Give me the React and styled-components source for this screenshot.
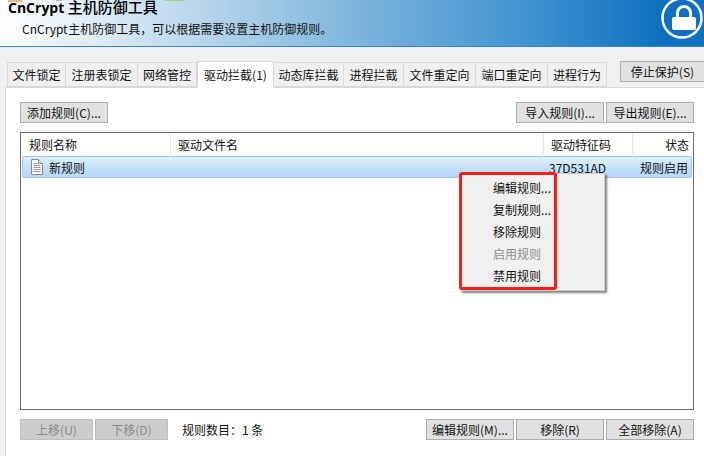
import React from "react";
import styled, { createGlobalStyle } from "styled-components";

const GlobalStyle = createGlobalStyle`
  html, body {
    margin: 0;
    padding: 0;
    background: #f0f0f0;
  }
  body {
    font-family: "Noto Sans CJK SC", "Open Sans", sans-serif;
    font-size: 12px;
    color: #111;
  }
  * {
    box-sizing: border-box;
  }
`;

const Page = styled.div`
  position: relative;
  width: 704px;
  height: 456px;
  overflow: hidden;
  display: flex;
  flex-direction: column;
`;

const Banner = styled.header`
  position: relative;
  flex: none;
  height: 47px;
  padding-left: 8px;
  border-bottom: 1px solid #2f86ee;
  background: linear-gradient(90deg, #ffffff 0%, #c9dff0 22%, #7fb6dc 50%, #3d91cf 76%, #0e70be 94%, #0e70be 100%);
`;

const Title = styled.h1`
  margin: -4px 0 0;
  font-size: 15px;
  line-height: 22px;
  font-weight: 500;
  color: #000;

  b {
    font-family: "Open Sans", sans-serif;
    font-size: 14px;
    font-weight: 700;
  }
`;

const Subtitle = styled.p`
  margin: 2px 0 0 14px;
  font-size: 12px;
  line-height: 16px;
  word-spacing: -2px;
  color: #111;
`;

const TopScraps = styled.svg`
  position: absolute;
  top: 0;
  left: 0;
`;

const LockIcon = styled.svg`
  position: absolute;
  top: -4px;
  right: 1px;
`;

const TabRow = styled.div`
  flex: none;
  height: 40px;
  padding: 13px 0 0 7px;
  display: flex;
  align-items: flex-end;
`;

const Tab = styled.div`
  width: ${(p) => p.$w}px;
  height: ${(p) => (p.$active ? 27 : 25)}px;
  margin-bottom: ${(p) => (p.$active ? -1 : 0)}px;
  display: flex;
  align-items: center;
  justify-content: center;
  background: ${(p) => (p.$active ? "#fff" : "#f0f0f0")};
  border: 1px solid #d9d9d9;
  border-left-width: ${(p) => (p.$first || p.$active ? 1 : 0)}px;
  border-bottom-color: ${(p) => (p.$active ? "#fff" : "#d9d9d9")};
  position: relative;
  z-index: ${(p) => (p.$active ? 1 : 0)};
  white-space: nowrap;
`;

const StopButton = styled.button`
  flex: none;
  width: 84px;
  height: 21px;
  margin: 0 0 5px 13px;
  padding: 0;
  font: inherit;
  color: #111;
  background: #e1e1e1;
  border: 1px solid #adadad;
  border-right: 0;
`;

const Panel = styled.main`
  flex: 1;
  margin-left: 5px;
  padding: 14px 10px 0 14px;
  background: #fff;
  border-left: 1px solid #d9d9d9;
  border-top: 1px solid #d9d9d9;
  display: flex;
  flex-direction: column;
`;

const ToolRow = styled.div`
  display: flex;
  align-items: center;
  gap: 2px;
  height: 21px;
`;

const Spacer = styled.div`
  flex: 1;
`;

const Button = styled.button`
  flex: none;
  width: ${(p) => p.$w}px;
  height: 21px;
  padding: 0;
  font: inherit;
  white-space: nowrap;
  color: ${(p) => (p.disabled ? "#8a8a8a" : "#111")};
  background: ${(p) => (p.disabled ? "#cccccc" : "#e1e1e1")};
  border: 1px solid ${(p) => (p.disabled ? "#bfbfbf" : "#adadad")};
`;

const Table = styled.section`
  flex: none;
  height: 278px;
  margin-top: 9px;
  padding: 0 1px;
  border: 1px solid #6b6b6b;
`;

const HeaderRow = styled.div`
  display: grid;
  grid-template-columns: 149px 373px 89px 1fr;
  height: 23px;
`;

const HeaderCell = styled.div`
  padding: 0 7px;
  line-height: 24px;
  border-right: 1px solid #e5e5e5;
  text-align: ${(p) => (p.$right ? "right" : "left")};

  &:last-child {
    border-right: 0;
    padding-right: 3px;
  }
`;

const Row = styled.div`
  display: grid;
  grid-template-columns: 147px 373px 90px 1fr;
  height: 22px;
  align-items: center;
  border: 1px solid #a3c5e6;
  border-radius: 2px;
  background: linear-gradient(180deg, #dff0fb 0%, #c6e2f8 50%, #b6d7fa 100%);
`;

const NameCell = styled.div`
  display: flex;
  align-items: center;
  gap: 6px;
  padding-left: 8px;
`;

const Cell = styled.div`
  padding-left: 6px;
  text-align: ${(p) => (p.$right ? "right" : "left")};
  padding-right: ${(p) => (p.$right ? 3 : 0)}px;
`;

const BottomRow = styled(ToolRow)`
  margin-top: 9px;
`;

const CountLabel = styled.span`
  margin-left: 12px;
`;

const Menu = styled.div`
  position: absolute;
  left: 460px;
  top: 173px;
  width: 145px;
  padding: 3px 0;
  background: #f0f0f0;
  border: 1px solid #d0d0d0;
  box-shadow: 2px 2px 2px rgba(0, 0, 0, 0.5);
`;

const MenuItem = styled.div`
  height: 22px;
  line-height: 21px;
  padding-left: 32px;
  color: ${(p) => (p.$disabled ? "#8d8d8d" : "#111")};
`;

const Highlight = styled.div`
  position: absolute;
  left: 459px;
  top: 172px;
  width: 98px;
  height: 118px;
  border: 3px solid #fb1c14;
  border-radius: 3px;
`;

const tabs = [
  { label: "文件锁定", w: 59 },
  { label: "注册表锁定", w: 72 },
  { label: "网络管控", w: 59 },
  { label: "驱动拦截(1)", w: 77, active: true },
  { label: "动态库拦截", w: 70 },
  { label: "进程拦截", w: 60 },
  { label: "文件重定向", w: 72 },
  { label: "端口重定向", w: 72 },
  { label: "进程行为", w: 59 },
];

const menuItems = [
  { label: "编辑规则..." },
  { label: "复制规则..." },
  { label: "移除规则" },
  { label: "启用规则", disabled: true },
  { label: "禁用规则" },
];

const FileIcon = () => (
  <svg width="12" height="16" viewBox="0 0 12 16">
    <path d="M.5 .5h7l4 4v11h-11z" fill="#fafafa" stroke="#8c8c8c" />
    <path d="M7.5 .5v4h4" fill="#e4e4e4" stroke="#8c8c8c" />
    <path d="M2.5 4.5h4M2.5 6.5h7M2.5 8.5h7M2.5 10.5h7M2.5 12.5h7" stroke="#9a9a9a" />
  </svg>
);

export default function App() {
  return (
    <Page>
      <GlobalStyle />
      <Banner>
        <TopScraps width="200" height="4" viewBox="0 0 200 4">
          <rect x="8" y="0" width="14" height="2" fill="#f2b27a" />
          <rect x="56" y="0" width="6" height="1" fill="#9ccf8a" />
          <rect x="165" y="0" width="20" height="1" fill="#9ccf8a" />
        </TopScraps>
        <Title>
          <b>CnCrypt</b> 主机防御工具
        </Title>
        <Subtitle>CnCrypt 主机防御工具，可以根据需要设置主机防御规则。</Subtitle>
        <LockIcon width="42" height="45" viewBox="0 0 42 45">
          <circle cx="21" cy="22" r="19.5" fill="none" stroke="#fff" strokeWidth="2.5" />
          <path d="M16.5 23v-6a6.5 6.5 0 0 1 13 0v6" fill="none" stroke="#fff" strokeWidth="3" />
          <rect x="11" y="21" width="24" height="13" rx="2" fill="#fff" />
        </LockIcon>
      </Banner>

      <TabRow>
        {tabs.map((t, i) => (
          <Tab key={t.label} $w={t.w} $active={t.active} $first={i === 0}>
            {t.label}
          </Tab>
        ))}
        <StopButton>停止保护(S)</StopButton>
      </TabRow>

      <Panel>
        <ToolRow>
          <Button $w={88}>添加规则(C)...</Button>
          <Spacer />
          <Button $w={88}>导入规则(I)...</Button>
          <Button $w={88}>导出规则(E)...</Button>
        </ToolRow>

        <Table>
          <HeaderRow>
            <HeaderCell>规则名称</HeaderCell>
            <HeaderCell>驱动文件名</HeaderCell>
            <HeaderCell>驱动特征码</HeaderCell>
            <HeaderCell $right>状态</HeaderCell>
          </HeaderRow>
          <Row>
            <NameCell>
              <FileIcon />
              新规则
            </NameCell>
            <Cell />
            <Cell>37D531AD</Cell>
            <Cell $right>规则启用</Cell>
          </Row>
        </Table>

        <BottomRow>
          <Button $w={73} disabled>上移(U)</Button>
          <Button $w={73} disabled>下移(D)</Button>
          <CountLabel>规则数目：1 条</CountLabel>
          <Spacer />
          <Button $w={88}>编辑规则(M)...</Button>
          <Button $w={88}>移除(R)</Button>
          <Button $w={88}>全部移除(A)</Button>
        </BottomRow>
      </Panel>

      <Menu>
        {menuItems.map((m) => (
          <MenuItem key={m.label} $disabled={m.disabled}>
            {m.label}
          </MenuItem>
        ))}
      </Menu>
      <Highlight />
    </Page>
  );
}
